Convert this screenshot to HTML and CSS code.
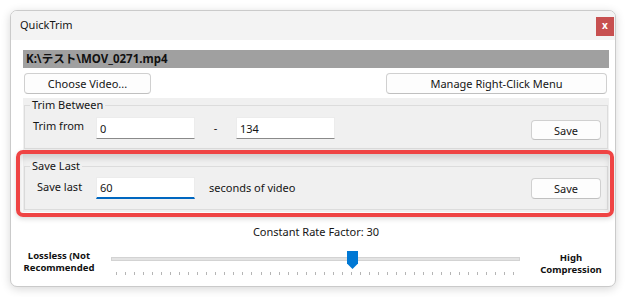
FILE: index.html
```html
<!DOCTYPE html>
<html lang="en">
<head>
  <meta charset="UTF-8">
  <title>QuickTrim</title>
  <link rel="stylesheet" href="styles.css">
</head>
<body>

  <div class="window">
    <div class="titlebar">
      <span class="title">QuickTrim</span>
      <span class="close">x</span>
    </div>

    <div class="content">
      <div class="path">K:\テスト\MOV_0271.mp4</div>

      <div class="actions">
        <button class="btn choose">Choose Video...</button>
        <button class="btn manage">Manage Right-Click Menu</button>
      </div>

      <div class="group">
        <fieldset class="frame">
          <legend>Trim Between</legend>
          <div class="row">
            <label class="lbl">Trim from</label>
            <input class="field" type="text" value="0">
            <span class="dash">-</span>
            <input class="field" type="text" value="134">
            <button class="btn save">Save</button>
          </div>
        </fieldset>
      </div>

      <!-- highlighted section -->
      <div class="group last">
        <fieldset class="frame">
          <legend>Save Last</legend>
          <div class="row">
            <label class="lbl">Save last</label>
            <input class="field active" type="text" value="60">
            <span class="unit">seconds of video</span>
            <button class="btn save">Save</button>
          </div>
        </fieldset>
      </div>

      <div class="crf">Constant Rate Factor: 30</div>

      <div class="slider-row">
        <div class="end-label left">Lossless (Not<br>Recommended</div>
        <div class="slider">
          <div class="track"></div>
          <div class="thumb"></div>
          <div class="ticks" id="ticks"></div>
        </div>
        <div class="end-label right">High<br>Compression</div>
      </div>
    </div>
  </div>

  <script>
    const ticks = document.getElementById("ticks");
    for (let i = 0; i < 45; i++) {
      ticks.appendChild(document.createElement("span"));
    }
  </script>

</body>
</html>
```

FILE: styles.css
```css
html, body {
  margin: 0;
  padding: 0;
}

body {
  padding: 10px;
  background: #fff;
  font-family: "Noto Sans", "Noto Sans CJK JP", sans-serif;
  font-size: 11px;
  color: #151515;
}

.window {
  width: 604px;
  height: 275px;
  border: 1px solid #cacaca;
  border-radius: 7px;
  background: #fff;
  box-shadow: 0 2px 10px rgba(0, 0, 0, 0.16);
  overflow: hidden;
}

.titlebar {
  height: 29px;
  background: #f3f3f3;
  display: flex;
  justify-content: space-between;
  align-items: flex-start;
}

.title {
  margin: 6px 0 0 9px;
  line-height: 16px;
}

.close {
  width: 18px;
  height: 19px;
  margin: 6px 1px 0 0;
  background: #c75050;
  color: #fff;
  font-weight: bold;
  font-size: 10px;
  line-height: 17px;
  text-align: center;
}

.content {
  padding: 10px 6px 0 12px;
}

.path {
  height: 18px;
  line-height: 18px;
  padding-left: 3px;
  background: #a0a0a0;
  font-size: 11.5px;
  font-weight: bold;
  color: #111;
}

.actions {
  display: flex;
  justify-content: space-between;
  margin-top: 5px;
  padding: 0 2px 0 1px;
}

.btn {
  height: 21px;
  padding: 0;
  background: #fdfdfd;
  border: 1px solid #d0d0d0;
  border-bottom-color: #c0c0c0;
  border-radius: 4px;
  font: inherit;
  color: #151515;
}

.choose {
  width: 127px;
}

.manage {
  width: 221px;
}

.group {
  position: relative;
  margin-top: 4px;
  padding: 0 1px 1px;
  background: #f0f0f0;
}

.frame {
  margin: 0;
  padding: 5px 6px 8px 8px;
  border: 1px solid #dcdcdc;
}

.frame legend {
  margin-left: -3px;
  padding: 0 2px;
  line-height: 14px;
}

.row {
  display: flex;
  align-items: flex-start;
}

.lbl {
  width: 63px;
  margin-top: 1px;
  line-height: 16px;
}

.field {
  width: 99px;
  height: 22px;
  box-sizing: border-box;
  padding: 0 0 0 3px;
  border: 1px solid #ececec;
  border-bottom-color: #8a8a8a;
  background: #fff;
  font: inherit;
  color: #151515;
  outline: none;
}

.field.active {
  border-bottom: 2px solid #0067c0;
}

.dash {
  width: 41px;
  text-align: center;
  line-height: 22px;
}

.unit {
  margin-left: 14px;
  line-height: 22px;
}

.save {
  width: 70px;
  height: 20px;
  margin-left: auto;
  margin-top: 3px;
}

/* Save Last section */
.last {
  margin-top: 4px;
  padding: 5px 1px 2px;
}

.last::after {
  content: "";
  position: absolute;
  top: -4px;
  bottom: -5px;
  left: -7px;
  right: -5px;
  border: 4px solid #ef4444;
  border-radius: 7px;
  box-shadow: inset 0 4px 6px rgba(0, 0, 0, 0.14), 0 2px 5px rgba(0, 0, 0, 0.15);
}

.last .frame {
  padding: 4px 6px 10px 8px;
}

.last .lbl {
  width: 59px;
  margin-left: 4px;
  margin-top: 2px;
}

.last .save {
  height: 21px;
  margin-top: 1px;
}

.crf {
  margin-top: 13px;
  line-height: 14px;
  text-align: center;
}

.slider-row {
  display: flex;
  align-items: flex-start;
  margin-top: 11px;
}

.end-label {
  font-size: 9.5px;
  font-weight: bold;
  line-height: 12px;
  text-align: center;
  white-space: nowrap;
  color: #111;
}

.end-label.left {
  width: 72px;
}

.end-label.right {
  width: 76px;
  margin-left: 13px;
  margin-top: 2px;
}

.slider {
  position: relative;
  width: 409px;
  height: 26px;
  margin-left: 16px;
}

.track {
  margin-top: 7px;
  height: 2px;
  background: #e3e3e3;
  border: 1px solid #d3d3d3;
}

.thumb {
  position: absolute;
  left: 236px;
  top: 1px;
  width: 11px;
  height: 18px;
  background: #0078d4;
  clip-path: polygon(0 0, 100% 0, 100% 70%, 50% 100%, 0 70%);
}

.ticks {
  display: flex;
  justify-content: space-between;
  height: 3px;
  margin-top: 11px;
  padding: 0 5px;
}

.ticks span {
  width: 1px;
  background: #b5b5b5;
}
```
